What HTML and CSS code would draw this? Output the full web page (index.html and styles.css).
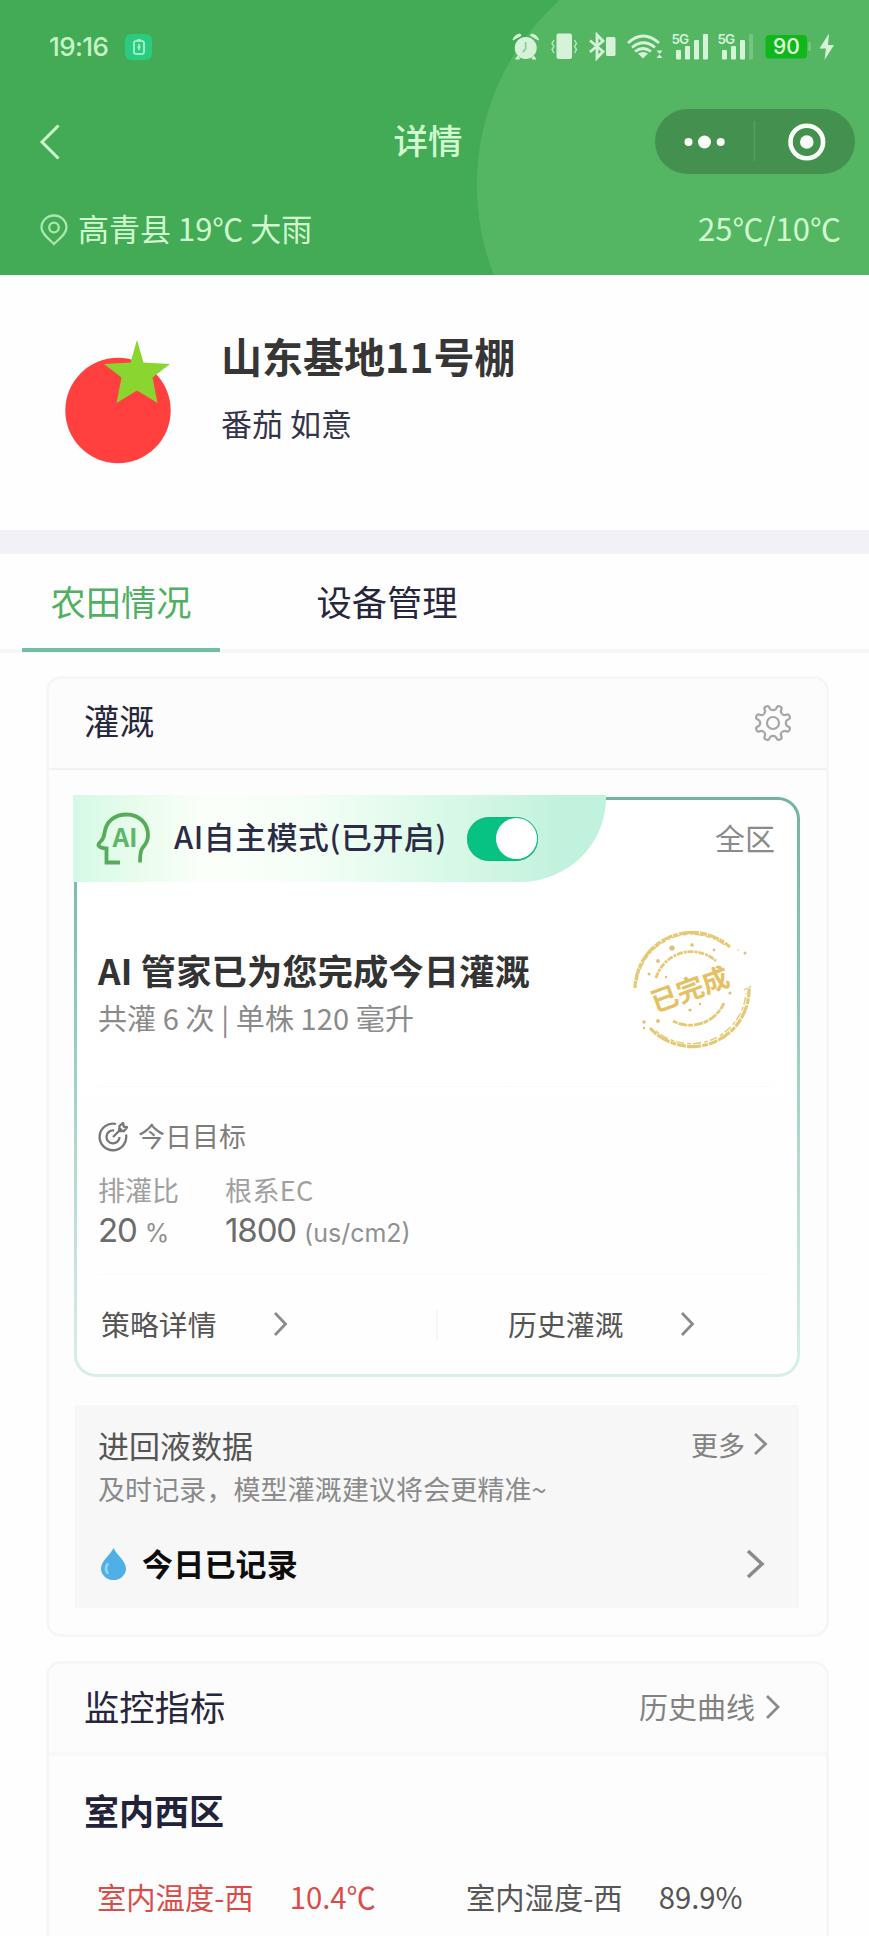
FILE: index.html
```html
<!DOCTYPE html>
<html lang="zh-CN">
<head>
<meta charset="utf-8">
<title>详情</title>
<link rel="stylesheet" href="styles.css">
</head>
<body>
<div class="phone">
  <header class="header">
    <div class="status">
      <span class="time">19:16</span>
      <span class="badge"><svg width="12" height="16" viewBox="0 0 12 16"><rect x="1" y="2" width="10" height="13" rx="2" fill="none" stroke="#b4f7d4" stroke-width="1.6"/><path d="M4 1h4M6 5v6M4.5 8h3" stroke="#b4f7d4" stroke-width="1.6" fill="none"/></svg></span>
      <svg class="status-icons" width="330" height="40" viewBox="510 27 330 40">
        <g fill="#d6f3da">
          <circle cx="525.7" cy="48" r="11"/>
          <path d="M513 40q1-5 7-6l1 1.500zM538.500 40q-1-5-7-6l-1 1.500zM518 56l-2.500 3h4zM533.500 56l2.500 3h-4z" stroke="#d6f3da" stroke-width="1"/>
          <rect x="556.500" y="33.500" width="15.500" height="25.500" rx="2"/>
          <rect x="606" y="37" width="9.500" height="19" rx="1.500"/>
          <path d="M638 53.500q5.500-3 10 0l-5 5z"/>
          <path d="M656.500 50.500h6l-3 3.500zM656.500 58l3-3.500 3 3.500z"/>
          <rect x="676" y="50" width="5" height="9.500" rx="1"/><rect x="685" y="46" width="5" height="13.500" rx="1"/><rect x="694" y="40" width="5" height="19.500" rx="1"/><rect x="703" y="34" width="5" height="25.500" rx="1"/>
          <rect x="722" y="50" width="5" height="9.500" rx="1"/><rect x="731" y="46" width="5" height="13.500" rx="1"/><rect x="740" y="40" width="5" height="19.500" rx="1"/><rect x="749" y="34" width="4" height="25.500" rx="1" opacity=".25"/>
          <path d="M829 33.500l-9.500 15h6.500l-1.500 11.500 9.500-15h-6z"/>
        </g>
        <path d="M525.700 42v7l-3 3" fill="none" stroke="#8fce98" stroke-width="1.800"/>
        <g fill="none" stroke="#d6f3da" stroke-width="2">
          <path d="M554 40l-2 3.500 2 3-2 3 2 3.500M574.500 40l2 3.500-2 3 2 3 -2 3.500" stroke-width="1.400" opacity=".8"/>
          <path d="M590 40.500l13 11-6 6.500v-23l6 6-13 11" stroke-width="2.800"/>
          <path d="M628 43q15-14 31 0M632 47.500q11.500-9.500 23 0M635 51.500q8-6 16 0" stroke-width="2.700"/>
        </g>
        <g fill="#d6f3da" font-family="Inter, sans-serif" font-size="13.500" font-weight="600" letter-spacing="-1"><text x="671.500" y="44">5G</text><text x="717.500" y="44">5G</text></g>
        <rect x="765.500" y="35" width="41.500" height="23.500" rx="4" fill="#0fb71b"/>
        <rect x="808.500" y="42" width="2" height="9" rx="1" fill="#7fce85"/>
        <text x="786.500" y="54" text-anchor="middle" font-family="Inter, sans-serif" font-size="21" font-weight="500" fill="#e2f9df">90</text>
      </svg>
    </div>
    <div class="nav">
      <svg class="back" width="22" height="38" viewBox="0 0 22 38"><path d="M19.500 2.500L3 19l16.500 16.500" fill="none" stroke="#cdf8cc" stroke-width="3"/></svg>
      <h1 class="nav-title">详情</h1>
      <div class="capsule">
        <svg width="200" height="65" viewBox="0 0 200 65"><g fill="#fafffa"><circle cx="33.500" cy="33" r="4"/><circle cx="49.500" cy="33" r="6.500"/><circle cx="65.700" cy="33" r="4"/><circle cx="151.800" cy="33" r="6.800"/></g><path d="M99.500 12v40" stroke="#56a05f" stroke-width="1.500"/><circle cx="151.800" cy="33" r="16.300" fill="none" stroke="#fafffa" stroke-width="4.600"/></svg>
      </div>
    </div>
    <div class="weather">
      <svg width="28" height="32" viewBox="0 0 28 32"><path d="M14 30C9 25 1.500 20 1.500 13.500a12.500 12 0 0 1 25 0C26.500 20 19 25 14 30z" fill="none" stroke="#a9e8ae" stroke-width="2.300"/><circle cx="14" cy="13.500" r="4.800" fill="none" stroke="#a9e8ae" stroke-width="2.300"/></svg>
      <span class="place">高青县 19℃ 大雨</span>
      <span class="range">25℃/10℃</span>
    </div>
  </header>

  <section class="profile">
    <svg class="tomato" width="108" height="126" viewBox="64 339 108 126"><circle cx="118" cy="410.500" r="52.700" fill="#ff403e"/><path d="M137 340l6.500 22.500 26.500 1.500-17.500 13.500 5 25.500-20.500-12.500-20.500 12.500 5-25.500-17.500-13.500 26.500-1.500z" fill="#8ad52f"/></svg>
    <div class="profile-text">
      <h2 class="base-name">山东基地11号棚</h2>
      <p class="crop">番茄 如意</p>
    </div>
  </section>

  <nav class="tabs">
    <a class="tab active">农田情况</a>
    <a class="tab">设备管理</a>
  </nav>

  <section class="card irrigation">
    <div class="card-head">
      <h3>灌溉</h3>
      <svg class="gear" width="38" height="38" viewBox="-19 -19 38 38" fill="none" stroke="#a6a6a6" stroke-width="2.200">
        <defs><path id="tooth" d="M0-12.800C2.500-12.800 3.300-14 3.800-15.800Q4.400-17.300 6.200-16.800L7.500-16.260Q9.100-15.350 8.500-13.850C7.560-12.200 7.300-10.800 9.050-9.050"/></defs>
        <use href="#tooth"/><use href="#tooth" transform="rotate(45)"/><use href="#tooth" transform="rotate(90)"/><use href="#tooth" transform="rotate(135)"/><use href="#tooth" transform="rotate(180)"/><use href="#tooth" transform="rotate(225)"/><use href="#tooth" transform="rotate(270)"/><use href="#tooth" transform="rotate(315)"/>
        <circle r="6"/>
      </svg>
    </div>

    <div class="ai-card">
      <div class="ai-top">
        <div class="ribbon">
          <svg width="55" height="53" viewBox="0 0 55 53"><path d="M24 50.500H10.500V36.500Q4 36 2.500 33.500Q2 32 5 29Q8 26 8.500 21C10 9 19 2.500 30.500 2.500C44 2.500 52 12 52 23.500C52 30 49 33 46.500 36Q44 39 44 50.500" fill="none" stroke="#58ab5a" stroke-width="3.800"/><text x="29" y="35" text-anchor="middle" font-family="Noto Sans CJK SC, sans-serif" font-weight="700" font-size="26" fill="#5cb768">AI</text></svg>
          <span class="mode">AI自主模式(已开启)</span>
          <span class="toggle"><i></i></span>
        </div>
        <span class="zone">全区</span>
      </div>
      <div class="summary">
        <div>
          <h4>AI 管家已为您完成今日灌溉</h4>
          <p>共灌 6 次 | 单株 120 毫升</p>
        </div>
        <svg class="stamp" width="120" height="120" viewBox="-60 -60 120 120" fill="none" stroke="#e6c976">
          <path d="M-57-1A57 57 0 0 1 38-42" stroke-width="3.200" stroke-dasharray="7 1 12 .8 5 1.200 20 1"/>
          <path d="M-55-8A55.500 55.500 0 0 1 34-43" stroke-width="1.400" stroke-dasharray="5 3 2 2 9 2"/>
          <path d="M-42 39A57 57 0 0 0 57-2" stroke-width="3.200" stroke-dasharray="9 1 14 1.200 6 1"/>
          <path d="M-36 42A55 55 0 0 0 54 4M52 1l7-4" stroke-width="1.400" stroke-dasharray="4 2 8 3"/>
          <path d="M-36-11A37 37 0 0 1 24-28" stroke-width="2.800" stroke-dasharray="6 1 3 .8"/>
          <path d="M-19 32A37 37 0 0 0 32 14" stroke-width="2.800" stroke-dasharray="5 1 9 .8"/>
          <g fill="#dcc17a" stroke="none"><circle cx="-20" cy="-41" r="2.600"/><circle cx="0" cy="-44" r="1.800"/><circle cx="-34" cy="-28" r="1.900"/><circle cx="-43" cy="-15" r="1.500"/><circle cx="22" cy="-39" r="1.400"/><circle cx="53" cy="-36" r="1.500"/><circle cx="46" cy="-39" r=".8"/><circle cx="-34" cy="32" r="1.900"/><circle cx="-48" cy="33" r="1.700"/><circle cx="-48" cy="39" r="1.200"/><circle cx="-2" cy="21" r="1.600"/><circle cx="38" cy="4" r="1.600"/><circle cx="-26" cy="-12" r="1.200"/><circle cx="8" cy="15" r="1.200"/></g>
          <text transform="rotate(-20)" x="-2" y="9.500" text-anchor="middle" font-family="Noto Sans CJK SC, sans-serif" font-weight="700" font-size="27" fill="#e6c163" stroke="none">已完成</text>
        </svg>
      </div>
      <div class="target">
        <div class="target-title">
          <svg width="30" height="30" viewBox="-15 -15 30 30" fill="none" stroke="#777" stroke-width="2.300"><path d="M3-13A13.300 13.300 0 1 0 13-2.500M1-6.500A6.500 6.500 0 1 0 6.500 0M0 0L8.500-8.500M6-6l.5-5 3.500-3 .8 3.500 3.200.8-3 3.700z"/></svg>
          <span>今日目标</span>
        </div>
        <div class="metrics">
          <div class="metric"><label>排灌比</label><div class="val">20<small>%</small></div></div>
          <div class="metric"><label>根系EC</label><div class="val">1800<small>(us/cm2)</small></div></div>
        </div>
      </div>
      <div class="links">
        <a class="link">策略详情 <svg width="16" height="26" viewBox="0 0 16 26"><path d="M2 2l10.500 11L2 24"/></svg></a>
        <span class="vline"></span>
        <a class="link">历史灌溉 <svg width="16" height="26" viewBox="0 0 16 26"><path d="M2 2l10.500 11L2 24"/></svg></a>
      </div>
    </div>

    <div class="record">
      <div class="record-head">
        <h4>进回液数据</h4>
        <a class="more">更多 <svg width="16" height="24" viewBox="0 0 16 24"><path d="M2 2l10.500 10L2 22"/></svg></a>
      </div>
      <p>及时记录，模型灌溉建议将会更精准~</p>
      <div class="record-row">
        <svg class="drop" width="27" height="34" viewBox="0 0 27 34"><path d="M13.500 1C16 7 26 14 26 21.500a12.500 11.500 0 0 1-25 0C1 14 11 7 13.500 1z" fill="#50afe6"/><path d="M7.500 17Q4.500 22 7.500 26" fill="none" stroke="#91d4fa" stroke-width="2.600" stroke-linecap="round"/></svg>
        <b>今日已记录</b>
        <svg class="go" width="20" height="32" viewBox="0 0 20 32"><path d="M2 3l14 13L2 29"/></svg>
      </div>
    </div>
  </section>

  <section class="card monitor">
    <div class="card-head">
      <h3>监控指标</h3>
      <a class="history">历史曲线 <svg width="16" height="26" viewBox="0 0 16 26"><path d="M2 2l11 11L2 24"/></svg></a>
    </div>
    <h4 class="area">室内西区</h4>
    <div class="readings">
      <div class="reading alert"><span>室内温度-西</span><span>10.4℃</span></div>
      <div class="reading"><span>室内湿度-西</span><span>89.9%</span></div>
    </div>
  </section>
</div>
</body>
</html>
```
FILE: styles.css
```css
* { box-sizing: border-box; margin: 0; padding: 0; }
body {
  font-family: "Noto Sans CJK SC", sans-serif;
  line-height: 1;
  background: #fefefe;
}
svg { display: block; flex: none; }
h1, h2, h3, h4 { font-weight: 400; }
.phone { width: 869px; height: 1936px; overflow: hidden; white-space: nowrap; }

/* green header with the large pale disc */
.header {
  height: 275px;
  background: radial-gradient(circle at 725px 185px, #54b663 247.5px, #43aa55 248.5px);
  color: #d0fad0;
}
.status { display: flex; align-items: center; height: 94px; padding: 0 29px 0 49px; }
.time { font-family: Inter, sans-serif; font-size: 26px; font-weight: 500; letter-spacing: -.6px; color: #c5f3c8; width: 76px; }
.badge { display: flex; align-items: center; justify-content: center; width: 27px; height: 26px; border-radius: 6px; background: #2bcb80; }
.status-icons { margin-left: auto; }
.nav { display: grid; grid-template-columns: 1fr auto 1fr; align-items: center; height: 95px; padding: 0 14px 0 39px; }
.nav-title { font-size: 34.5px; margin: -4px 0 0 -38px; font-weight: 500; }
.capsule { justify-self: end; width: 200px; height: 65px; border-radius: 33px; background: #44914f; }
.weather { display: flex; align-items: center; height: 82px; padding: 0 28px 0 40px; font-size: 31px; }
.weather span { margin-top: -5px; }
.weather .place { margin-left: 10px; }
.weather .range { margin-left: auto; }

.profile { display: flex; height: 255px; padding: 64px 64px 0; }
.profile-text { margin: -13px 0 0 49px; }
.base-name { height: 60px; line-height: 58px; font-size: 41px; font-weight: 700; color: #363636; }
.crop { height: 50px; line-height: 50px; margin-top: 12px; font-size: 31px; color: #34344a; }

.tabs { display: flex; gap: 68px; height: 123px; padding-left: 22px; border-top: 24px solid #f1f1f6; border-bottom: 4px solid #f6f6f6; }
.tab { width: 198px; height: 98px; line-height: 93px; text-align: center; font-size: 35.3px; color: #26263c; }
.tab.active { color: #50b061; border-bottom: 4px solid #74bda3; }

.card { width: 783px; margin: 23px 0 0 46px; border: 3px solid #f6f6f6; border-radius: 15px; background: #fdfdfd; }
.card-head { display: flex; justify-content: space-between; align-items: center; height: 91px; padding: 0 34px 0 35px; border-bottom: 2px solid #f2f2f2; background: #fcfcfc; border-radius: 12px 12px 0 0; }
.card-head h3 { font-size: 35.3px; margin-top: -7px; color: #26263c; }
.gear { margin-top: -1px; }
.irrigation { height: 961px; }

.ai-card {
  height: 580px; margin: 27px 26px 0 25px;
  border: 3px solid transparent; border-radius: 22px;
  background: linear-gradient(#fff, #fefefe) padding-box, linear-gradient(#6fb59b, #8dcbb5 35%, #b5dccd 65%, #d7f0e7) border-box;
}
.ai-top { display: flex; justify-content: space-between; height: 82px; margin-left: -4px; }
.ribbon {
  display: flex; align-items: center; width: 533px; height: 87px; margin-top: -5px; padding-left: 23px;
  border-bottom-right-radius: 86px 84px;
  background: linear-gradient(90deg, #d5f9e6, #e9fcec 12%, #fbfffa 25%, #f4fef6 45%, #ddfae9 66%, #d1f6e3 78%, #c0f2dd 92%, #c0f2dd);
}
.mode { margin: -4px 0 0 23px; width: 293px; font-size: 30.8px; letter-spacing: .6px; font-weight: 500; color: #2b2b45; }
.toggle { display: flex; justify-content: flex-end; width: 71px; height: 44px; padding: 1.5px; border-radius: 22px; background: #07c282; box-shadow: inset 0 0 1px #257c5a; }
.toggle i { width: 41px; height: 41px; border-radius: 50%; background: #fff; }
.zone { margin-right: 22px; line-height: 74px; font-size: 30px; color: #8b8b8b; }

.summary { display: flex; justify-content: space-between; height: 204px; margin: 0 27px 0 21px; padding-top: 47px; }
.summary h4 { margin-top: 17px; height: 50px; line-height: 47px; font-size: 35.2px; letter-spacing: .2px; font-weight: 700; color: #333; }
.summary p { margin-top: 3px; height: 40px; line-height: 37px; font-size: 29px; letter-spacing: .1px; color: #8a8a8a; }
.stamp { margin-right: 18px; }

.target { height: 189px; margin: 0 26px 0 21px; padding-top: 30px; border-top: 1px solid #fafafa; border-bottom: 1px solid #f9f9f9; }
.target-title { display: flex; align-items: center; gap: 10px; height: 40px; font-size: 27px; color: #7d7d7d; }
.target-title span { line-height: 36px; margin-top: -3px; }
.metrics { display: flex; gap: 46px; margin-top: 14px; }
.metric label { display: block; height: 40px; line-height: 38px; font-size: 27px; color: #a0a0a0; }
.metric:last-child label { letter-spacing: .4px; }
.metric:first-child { width: 81px; }
.val { height: 40px; line-height: 38px; font-family: Inter, sans-serif; font-size: 33px; letter-spacing: -1.1px; color: #6c6c6c; }
.val small { font-size: 25px; letter-spacing: 0; color: #909090; margin-left: 8px; }

.links { display: flex; align-items: center; height: 99px; padding-left: 24px; }
.link { display: flex; align-items: center; width: 188px; justify-content: space-between; font-size: 28.9px; line-height: 32px; padding-bottom: 3px; color: #555; }
.link svg { margin-top: 2px; }
.links svg, .record svg, .history svg { stroke: #8b8b8b; stroke-width: 2.800; fill: none; }
.vline { width: 2px; height: 30px; margin: 0 70px 0 147px; background: #f6f6f6; }

.record { height: 203px; margin: 28px 27px 0 26px; padding: 20px 26px 0 23px; background: #f7f7f7; }
.record-head { display: flex; justify-content: space-between; height: 43px; }
.record-head h4 { line-height: 39px; font-size: 31px; color: #555; }
.more, .history { display: flex; align-items: center; color: #828282; }
.more { height: 38px; gap: 8px; margin-right: 4px; font-size: 27px; }
.record p { height: 43px; line-height: 42px; font-size: 27px; letter-spacing: .1px; color: #8a8a8a; }
.record-row { display: flex; align-items: center; height: 42px; margin-top: 32px; font-size: 31px; color: #0c0c0c; }
.record-row b { margin: -3px 0 0 15px; letter-spacing: .2px; }
.record svg.drop { margin-left: 2px; stroke-width: 0; }
.record svg.drop path:last-child { stroke-width: 2.600; }
.record svg.go { margin-left: auto; margin-right: 7px; stroke-width: 3.600; }

.monitor { margin-top: 24px; height: 400px; }
.monitor .card-head { height: 92px; border-bottom: 4px solid #f8f8f8; }
.monitor .card-head h3 { margin-top: -5px; }
.history { gap: 10px; font-size: 29px; margin-top: -4px; padding-right: 11px; }
.history svg { margin-top: 2px; }
.area { height: 50px; line-height: 47px; margin: 30px 0 0 35px; font-size: 35px; font-weight: 700; color: #22223a; }
.readings { display: grid; grid-template-columns: 369px 1fr; height: 50px; margin: 37px 0 0 48px; font-size: 29.3px; line-height: 47px; color: #565656; }
.reading { display: flex; gap: 36px; }
.alert { color: #da4c48; }
```
